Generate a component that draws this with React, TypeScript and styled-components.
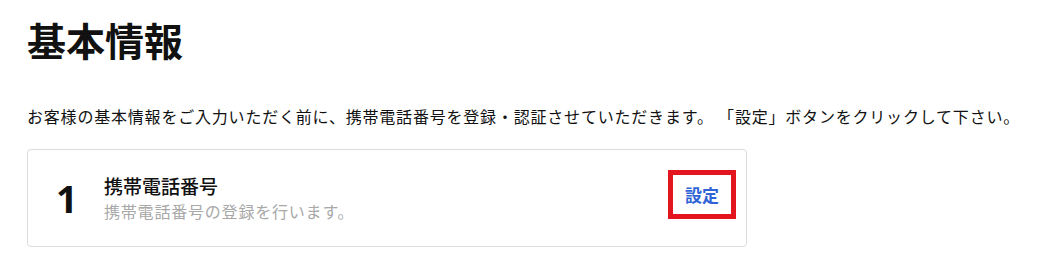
import styled, { createGlobalStyle } from "styled-components";

const GlobalStyle = createGlobalStyle`
    body {
        margin: 0;
        background: #fff;
        font-family: "Noto Sans CJK JP", "Noto Sans", sans-serif;
        color: #111;
    }
`;

const steps = [
    { no: 1, title: "携帯電話番号", note: "携帯電話番号の登録を行います。", action: "設定" },
];

const App = () => {
    return (
        <>
            <GlobalStyle />
            <Page>
                <Heading>基本情報</Heading>
                <Lead>
                    お客様の基本情報をご入力いただく前に、携帯電話番号を登録・認証させていただきます。 「設定」ボタンをクリックして下さい。
                </Lead>
                {steps.map((step) => (
                    <StepCard key={step.no}>
                        <StepNo>{step.no}</StepNo>
                        <StepBody>
                            <StepTitle>{step.title}</StepTitle>
                            <StepNote>{step.note}</StepNote>
                        </StepBody>
                        <SetButton type="button">{step.action}</SetButton>
                    </StepCard>
                ))}
            </Page>
        </>
    );
};

const Page = styled.main`
    padding: 10px 27px 0;
    display: flex;
    flex-direction: column;
`;

const Heading = styled.h1`
    margin: 0;
    font-size: 39px;
    font-weight: 700;
    line-height: 58px;
`;

const Lead = styled.p`
    margin: 36px 0 0;
    font-size: 16px;
    line-height: 24px;
    letter-spacing: 0.8px;
    white-space: nowrap;
`;

const StepCard = styled.section`
    margin-top: 21px;
    width: 720px;
    height: 98px;
    box-sizing: border-box;
    border: 1px solid #dcdcdc;
    border-radius: 4px;
    display: flex;
    align-items: center;
    padding: 0 10px 0 28px;
`;

const StepNo = styled.div`
    width: 48px;
    font-size: 38px;
    font-weight: 700;
    line-height: 1;
    font-family: "Noto Sans", sans-serif;
`;

const StepBody = styled.div`
    flex: 1;
    display: flex;
    flex-direction: column;
    gap: 2px;
`;

const StepTitle = styled.div`
    font-size: 19px;
    font-weight: 500;
    line-height: 24px;
    color: #111;
`;

const StepNote = styled.div`
    font-size: 16px;
    line-height: 22px;
    letter-spacing: 0.8px;
    color: #a8a8a8;
`;

const SetButton = styled.button`
    width: 68px;
    height: 49px;
    margin-bottom: 7px;
    box-sizing: border-box;
    border: 5px solid #e3161f;
    background: #fff;
    color: #2f63d6;
    font-family: inherit;
    font-size: 17px;
    font-weight: 700;
    padding: 0;
    cursor: pointer;
`;

export default App;
